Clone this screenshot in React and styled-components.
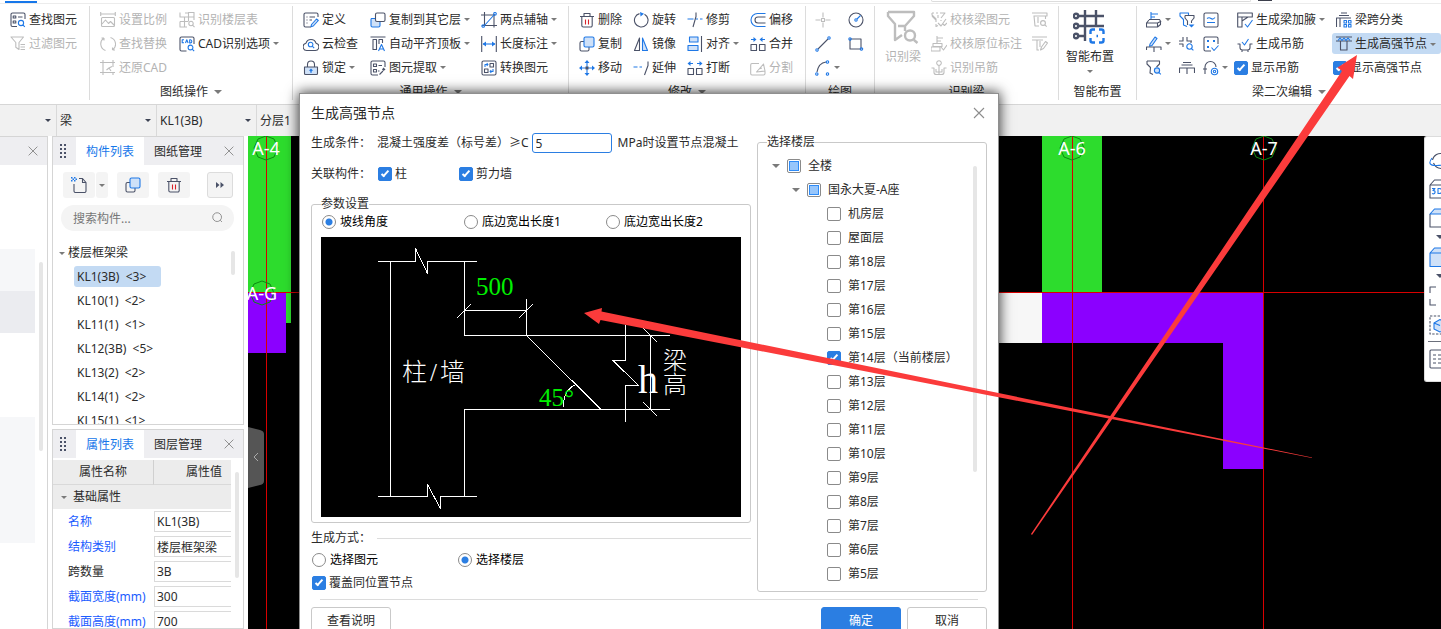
import React from 'react';
import styled, { createGlobalStyle, css } from 'styled-components';

const INK = '#4b5268';
const BLUE = '#1f78e6';
const GREY = '#bdbdbd';
const PALE = '#cfe1f8';

const GlobalStyle = createGlobalStyle`
  *, *::before, *::after { box-sizing: border-box; }
  body { margin: 0; overflow: hidden; }
  body, button, input, select {
    font-family: "Noto Sans", "Noto Sans CJK SC", sans-serif;
    font-size: 12px;
    line-height: 18px;
    color: #2b2b2b;
  }
  button, input, select { margin: 0; padding: 0; border: 0; background: none; }
  ul { list-style: none; margin: 0; padding: 0; }
`;

/* ---------- icons ---------- */

const PEN = {
  d: { stroke: INK }, b: { stroke: BLUE }, g: { stroke: GREY }, r: { stroke: '#d8232a' },
  db: { stroke: BLUE, strokeDasharray: '3 1.6' },
  dd: { stroke: INK, strokeDasharray: '2.4 1.4' },
  L: { stroke: BLUE, fill: PALE }, LD: { stroke: INK, fill: PALE }, W: { stroke: INK, fill: '#fff' },
  B: { fill: BLUE }, D: { fill: INK }, P: { fill: '#8fc0fa' },
  x: { stroke: '#8c8c8c' },
  G: { stroke: GREY, strokeWidth: 2.4 },
  N: { stroke: INK, strokeWidth: 2.4 },
  K: { stroke: BLUE, strokeWidth: 2.4 },
};
const ring = (x, y, r) => `M${x - r} ${y}a${r} ${r} 0 1 0 ${2 * r} 0a${r} ${r} 0 1 0 ${-2 * r} 0`;
const lens = (x, y, r) => `${ring(x, y, r)}M${x + r * 0.7} ${y + r * 0.7}l2 2`;
const trash = [['d', 'M1 4.5h14M5 4.5v-3h6v3M2.8 4.5v9a1.5 1.5 0 0 0 1.5 1.5h7.4a1.5 1.5 0 0 0 1.5-1.5v-9'], ['r', 'M6.5 7.5v5M9.5 7.5v5']];

const ICONS = {
  find: [['d', 'M7 14.5H2.5a1.5 1.5 0 0 1-1.5-1.5V2.5A1.5 1.5 0 0 1 2.5 1h11A1.5 1.5 0 0 1 15 2.5V7M3.2 4h2.6v2H3.2zM3.2 9h2.6v2H3.2zM8 5h4.5'], ['b', lens(11, 11, 2.6)]],
  filter: [['g', 'M1 1h12.5L9 6.5v7l-3.2-2.2V6.5zM10.5 8.5H15M10.5 11H15M10.5 13.5H15']],
  scale: [['g', 'M.7 0v4M15.3 0v4M.7 2h14.6M2.5 5.5h11a1 1 0 0 1 1 1v7a1 1 0 0 1-1 1h-11a1 1 0 0 1-1-1v-7a1 1 0 0 1 1-1zM2 12l3.5-4 3 3.5 2-2L14 13']],
  table: [['g', 'M1 .5V5h4.500M9.500 5V.5H15v5M6 1h3.500M5.500 5h9.500v3M1 9.500h8.500M1 9.500V15h7M5.500 5v9.800M9.500 5v4'], ['g', lens(12, 11.5, 2.2)]],
  replace: [['g', 'M5.500 14.500A7 7 0 0 1 4 2M4 2H1.500M4 2v2.500M10.500 1.500A7 7 0 0 1 12.500 14M12.500 14h2.500M12.500 14v-2.500']],
  cad: [['d', 'M7.500 15H2.500A1.500 1.500 0 0 1 1 13.500v-11A1.500 1.500 0 0 1 2.500 1h11A1.500 1.500 0 0 1 15 2.500V8'], ['b', lens(11.5, 11.5, 2.4)], ['b', 'M5 3.800H3.200v3H5M6.500 7l1.300-3.200L9.100 7M10.700 3.800v3.100h.8q1.300-.1 1.300-1.500t-1.300-1.600z']],
  restore: [['g', 'M0 2.500h15M3 0v15M0 12.500h15M13 0v7M13 12v3M12 6.500l-3 1.500 2 3M9 8l-2.500 2']],
  define: [['d', 'M8 15H2.500A1.500 1.500 0 0 1 1 13.500v-11A1.500 1.500 0 0 1 2.500 1h11A1.500 1.500 0 0 1 15 2.500V5M3.500 5h1M6.500 5H12M3.500 8h1M6.500 8H9M3.500 11h1'], ['L', 'M8.500 12.500l5-5.500 1.800 1.500-5 5.500-2.300.7z']],
  cloud: [['d', 'M4 14.500A3.700 3.700 0 0 1 3 7.200 5.200 5.200 0 0 1 13 7.200a3.700 3.700 0 0 1-1 7.300z'], ['b', lens(7.600, 8.500, 2.3)]],
  lock: [['d', 'M4.500 7V4.500a3.500 3.500 0 0 1 7 0V7'], ['LD', 'M1.500 7h13v6.500a1 1 0 0 1-1 1h-11a1 1 0 0 1-1-1z'], ['B', 'M8 8.600l2 2-1.300.4v1.800H7.300V11L6 10.600z']],
  copyTo: [['L', 'M1.500 6.500H9A1 1 0 0 1 10 7.500v6a1.500 1.500 0 0 1-1.500 1.500h-6A1.500 1.500 0 0 1 1 13.500v-6a1 1 0 0 1 .5-1z'], ['W', 'M7 1h6.500A1.500 1.500 0 0 1 15 2.500V8a1.500 1.500 0 0 1-1.500 1.500H7A1.500 1.500 0 0 1 5.500 8V2.500A1.500 1.500 0 0 1 7 1z']],
  autoAlign: [['d', 'M.5 1h15M3 3.500h3.500v10H3zM9 8V3.500h3.500V7'], ['b', 'M8.500 15l3-6.500 3 6.500M9.500 13h4']],
  extract: [['d', 'M8 15H2.500A1.500 1.500 0 0 1 1 13.500v-11A1.500 1.500 0 0 1 2.500 1h11A1.500 1.500 0 0 1 15 2.500V7M3.500 4h3v2.500h-3zM3.500 9.500h3V12h-3zM8.500 5.500H12M8 11h1.500M9.500 14.500l3.500-3.500'], ['D', 'M12 9.500l1.500-2 2 2-2 1.500z']],
  twoPoint: [['d', 'M0 3h14M3.500 0v14M13 2v13.500M1 13.500h15'], ['b', `M3 14L13 3${ring(14, 1.800, 1.3)}${ring(2.200, 14, 1.3)}`]],
  length: [['d', 'M.7 0v16M15.300 0v16'], ['b', 'M2 8h12'], ['B', 'M1.500 8L5 5.500v5zM14.500 8L11 5.500v5z']],
  convert: [['d', 'M2.500 1h11A1.500 1.500 0 0 1 15 2.500v11a1.500 1.500 0 0 1-1.500 1.500h-11A1.500 1.500 0 0 1 1 13.500v-11A1.500 1.500 0 0 1 2.500 1zM9 3.500h3.500V7H9zM3.500 9H7v3.500H3.500z'], ['b', 'M4 7V4.500h2.500M12 9v2.500H9.500M5.700 3l1.300 1.500L5.700 6M10.300 10L9 11.500l1.300 1.500']],
  trash,
  rotate: [['d', 'M11.500 2.200A6.800 6.800 0 1 1 6.500 1.600'], ['B', 'M7 0l4 1.800L7.600 4.600z']],
  trim: [['d', 'M9 .5v4L6 15'], ['b', 'M.5 7h6M9 7h2M13 7h2.500']],
  offset: [['b', 'M15.500 1.500H7.500a6 6 0 0 0 0 13h8'], ['d', 'M15.500 5H8a3 3 0 0 0 0 6h7.500']],
  copy: [['d', 'M5 5.500H2.500A1.500 1.500 0 0 0 1 7v6.500A1.500 1.500 0 0 0 2.500 15h6a1.500 1.500 0 0 0 1.500-1.500V11'], ['L', 'M6.500 1h7A1.500 1.500 0 0 1 15 2.500v7a1.500 1.500 0 0 1-1.500 1.500h-7A1.500 1.500 0 0 1 5 9.500v-7A1.500 1.500 0 0 1 6.500 1z']],
  mirror: [['d', 'M6.500 2v12.500h-5z'], ['L', 'M9.500 2v12.500h5z']],
  align: [['L', 'M2.500 1H11v5H2.500zM1 9.500h10v5H1z'], ['d', 'M14.500 0v16']],
  merge: [['d', 'M1 8.500h5.500v6H1zM9.500 8.500H15v6H9.500z'], ['b', 'M1 3.500h3.500M15 3.500h-3.500'], ['B', 'M6.500 3.500L3.500 1v5zM9.500 3.500l3-2.500v5z']],
  move: [['b', 'M8 1v14M1 8h14'], ['B', 'M8 0l2.500 3h-5zM8 16l2.500-3h-5zM0 8l3-2.500v5zM16 8l-3-2.500v5z'], ['D', 'M6.500 6.500h3v3h-3z']],
  extend: [['b', 'M.5 7h4M6.500 7H9'], ['d', 'M15 1.500v4L11.500 15']],
  cut: [['d', 'M1 8.500h5.500v6H1zM9.500 8.500H15v6H9.500z'], ['b', 'M2.500 3.500H6M13.500 3.500H10'], ['B', 'M.5 3.500L3.500 1v5zM15.500 3.500l-3-2.500v5z']],
  split: [['g', 'M9 3.500H2A1.500 1.500 0 0 0 .7 5v8.500A1.500 1.500 0 0 0 2 15h11.500a1.500 1.500 0 0 0 1.500-1.500V11M6.500 12l7-8 1.500 7zM9 9l3-1']],
  point: [['g', 'M8 .5v5M8 10.500v5M.5 8h5M10.500 8h5M6.500 6.500h3v3h-3z']],
  circle: [['d', ring(8, 8, 7)], ['b', `${ring(8, 8, 1.2)}M9 7l3.500-3.500`]],
  line: [['d', 'M3 13L13 3'], ['b', `${ring(2, 14, 1.2)}${ring(14, 2, 1.2)}`]],
  rect: [['d', 'M2 3h11v10H2z'], ['b', `${ring(2, 3, 1.2)}${ring(13.500, 13, 1.2)}`]],
  arc: [['d', 'M2 12Q3.500 3 11 2'], ['b', `${ring(12.500, 2, 1.2)}${ring(1.800, 14, 1.2)}${ring(12.500, 14, 1.2)}`]],
  checkBeam: [['g', 'M1 1h2M5 1h2M9 1h5l-4 5M1 1v2l4 4v3M1 4l4 4M5 12v2.500l2-1M7 3v3M10 8v1M7 11l3 3 5-7M12 12l1.500 1.500L16 11']],
  checkOrig: [['g', 'M6 0v7M6 2h6M6 5h4M2 7.500h9v3H2zM0 11h9v4H0zM10 11l2.500 3L16 9']],
  hangerG: [['g', `${ring(8, 3, 2.3)}M8 5.500V14M.5 8h2.500v4.500q0 2 2.500 2h5q2.500 0 2.500-2V8h2.500M5 9v3h6V9`]],
  beamFind: [['g', 'M0 1h15v3h-1.500v3M1.500 4h12M2 4l1 10h4M6 5v6'], ['g', lens(11, 11, 2.4)]],
  beamEdit: [['g', 'M0 1h15M0 4h11M5 4v10H7M8 11V5M8.500 14l1-3 4-5.500 2 1.500-4 5.500z']],
  annot: [['b', 'M5 0v7M5 2h7M5 5h4'], ['d', 'M3 7.500h10.500l1.500 2.500M.5 11h11v4H.5zM3 8l-2.500 3M11.500 11l3-1.500v3l-3 2.500']],
  annotEdit: [['L', 'M4 8l5-7 2 1.500-5 7-2.500.8z'], ['d', 'M.5 14V11h14.500v3M8 11v5']],
  funnelFind: [['d', 'M1 1h12.500v3L10.500 7M1 1v3l3.500 3.500L4 13l3 1.500'], ['L', lens(11, 10.5, 2.6)]],
  funnels: [['b', 'M9.500 3V1H1v3l3.500 3.500V13l3.500 1.500'], ['d', 'M6 3.500h9V6l-2.500 3v2M6 3.500V6l2.500 3v4'], ['B', 'M9.500 12.500h6l-3 3z']],
  spanFind: [['d', 'M0 5h4V1M8 1v4h5M0 8h4v3M12 5v2'], ['b', lens(10.5, 10.5, 2.7)]],
  spans: [['d', 'M4 2.500h8M2.500 5h11M.5 13V8h15v5M8 8v6']],
  tag: [['d', 'M2.500 1h11A1.500 1.500 0 0 1 15 2.500v11a1.500 1.500 0 0 1-1.500 1.500h-11A1.500 1.500 0 0 1 1 13.500v-11A1.500 1.500 0 0 1 2.500 1z'], ['b', 'M4 6.500q2-1.500 4 0t4-1M4 10.500h8']],
  dots: [['d', 'M8 15H2.500A1.500 1.500 0 0 1 1 13.500v-11A1.500 1.500 0 0 1 2.500 1h11A1.500 1.500 0 0 1 15 2.500V8'], ['B', 'M4 4h2v2H4zM10 4h2v2h-2zM4 10h2v2H4z'], ['b', 'M8.500 11.500l2.500 3 4.500-5']],
  hook: [['d', 'M2 14V7a5.500 5.500 0 0 1 11 0M0 9h4'], ['b', `${ring(11.500, 11.500, 3.2)}${ring(11.500, 11.500, 1.2)}`]],
  haunch: [['d', 'M.7 1h14.600v4H.7zM.7 5v10H5V5M5 9l6-4'], ['b', 'M8 12l2.500 3L15.500 8']],
  hanger: [['d', 'M.5 8H3v3.500Q3 14 5.500 14h5Q13 14 13 11.500V8h2.500M5 14.500v1.500M11 14.500v1.500'], ['b', 'M5 6l2.500 3L11.500 3']],
  spanClass: [['d', 'M5 1h6M3 3.500h10M.5 15V6H15M4 6v9'], ['b', 'M8 8.500h2.500V11H8zM12.500 8.500H15V11h-2.500zM8 12.500h2.500V15H8zM12.500 12.500H15V15h-2.500z']],
  node: [['d', 'M0 1h16M0 5h16M4.500 5v9h6.500V5'], ['b', 'M2 4.500l2-2.500 2 2.500 2-2.500 2 2.500 2-2.500 2 2.500']],
  newItem: [['d', 'M8 1.500h3.500L15 5.500V14a1.500 1.500 0 0 1-1.500 1.500h-9A1.500 1.500 0 0 1 3 14V7M11.500 1.500v4H15'], ['B', 'M0 0h1.500v1.500H0zM3 0h1.500v1.500H3zM1.500 1.500H3V3H1.500zM4.500 1.500H6V3H4.500zM0 3h1.500v1.500H0zM3 3h1.500v1.500H3z']],
  more: [['D', 'M4 5l3.500 3L4 11zM8.500 5L12 8l-3.500 3z']],
  search: [['x', lens(7, 7, 5)]],
  close: [['x', 'M3 3l10 10M13 3L3 13']],
  grip: [['D', 'M4 1h2v2H4zM8 1h2v2H8zM4 5h2v2H4zM8 5h2v2H8zM4 9h2v2H4zM8 9h2v2H8zM4 13h2v2H4zM8 13h2v2H8z']],
  orbit: [['d', 'M3.500 10a8 8 0 1 1 14.500 6M4.500 13a9 9 0 0 0 8 5.500H20'], ['b', 'M3 8Q-3 16 8 15.500T20 10']],
  cube: [['d', 'M1 6h18v12.500H1zM1 6l4.500-5H20']],
  cubeText: [['d', 'M1 6v13h18M1 6l4.500-5H20M1 6h18'], ['b', 'M3 9.500h3l-2 2q2.500 0 2 2t-3 1M9 9.500v5h1q3 0 3-2.500t-3-2.500z']],
  cubeTop: [['d', 'M1 6v13h18'], ['L', 'M1 6l4.500-5H20v5z']],
  cubeFill: [['L', 'M1 6l4.500-5H20v18.500H1zM1 6h18']],
  corners: [['d', 'M1 7V1h6M1 13v6h6M13 1h6v6M13 19h6v-6']],
  cubeDash: [['dd', 'M1 1h18v18H1z'], ['L', 'M5 8l6-3.500 6 3.500v6l-6 3-6-3zM5 8l6 2.500']],
  list: [['d', 'M2 1h17v18H2a1 1 0 0 1-1-1V2a1 1 0 0 1 1-1zM4 6h3M9 6h8M4 10h3M9 10h8M4 14h3M9 14h8']],
  bigFunnel: [['G', 'M2 2h26v4l-9 10M2 2v4l7 8v16l7-5M12 16h7v5'], ['G', 'M19 25.500a5 5 0 1 0 10 0a5 5 0 1 0-10 0M28 30l3.500 3']],
  bigGrid: [['N', 'M5 6h26M5 16h26M5 26h8M12 0v31M23 0v16'], ['N', `${ring(3, 6, 2.2)}${ring(3, 16, 2.2)}${ring(3, 26, 2.2)}`], ['K', 'M17.500 24v-2.500a2 2 0 0 1 2-2H22M26 19.500h2.500a2 2 0 0 1 2 2V24M30.500 28v2.500a2 2 0 0 1-2 2H26M22 32.500h-2.500a2 2 0 0 1-2-2V28M23.500 26h1.500']],
};

const Svg = styled.svg`
  flex: none;
  display: block;
  width: ${p => p.$size}px;
  height: ${p => p.$size}px;
`;
const Icon = ({ name, size = 16, box = 16 }) => (
  <Svg $size={size} viewBox={`0 0 ${box} ${box}`} fill="none" strokeWidth="1.1" strokeLinejoin="round" aria-hidden="true">
    {ICONS[name].map(([pen, d], i) => <path key={i} d={d} {...PEN[pen]} />)}
  </Svg>
);

const Caret = styled.span`
  flex: none;
  border: ${p => p.$size || 3}px solid transparent;
  border-top-color: ${p => p.$color || '#7a7a7a'};
  border-bottom: 0;
`;

/* ---------- controls ---------- */

const CheckBox = styled.input.attrs({ type: 'checkbox' })`
  appearance: none;
  flex: none;
  width: 14px;
  height: 14px;
  border: 1px solid #8a8a8a;
  border-radius: 2px;
  background: #fff;
  position: relative;
  &:checked { background: #2b7ee2; border-color: #2b7ee2; }
  &:checked::after {
    content: '';
    position: absolute;
    left: 4px;
    top: 1px;
    width: 4px;
    height: 8px;
    border: solid #fff;
    border-width: 0 2px 2px 0;
    transform: rotate(42deg);
  }
  ${p => p.$partial && css`
    &::before {
      content: '';
      position: absolute;
      inset: 1px;
      background: #97c6fb;
      border: 1px solid #2e8bf7;
    }
  `}
`;
const Radio = styled.input.attrs({ type: 'radio' })`
  appearance: none;
  flex: none;
  width: 14px;
  height: 14px;
  border: 1px solid #8a8a8a;
  border-radius: 50%;
  background: #fff;
  &:checked { background: radial-gradient(circle, #2b7ee2 3px, #fff 4px); }
`;
const Choice = styled.label`
  display: flex;
  align-items: center;
  gap: ${p => p.$gap || 3}px;
  height: 18px;
  white-space: nowrap;
  color: ${p => (p.$strong ? '#000' : '#2b2b2b')};
`;

/* ---------- ribbon ---------- */

const Shell = styled.div`
  position: relative;
  display: flex;
  flex-direction: column;
  height: 100vh;
  overflow: hidden;
  background: #fff;
`;
const TabStrip = styled.div`
  height: 4px;
  border-bottom: 1px solid #ececec;
  padding: 0 169px 0 5px;
  display: flex;
  align-items: flex-end;
  flex: none;
`;
const ActiveMark = styled.div`
  width: 32px;
  height: 2px;
  margin-right: auto;
  background: #1677ea;
`;
const SearchEdge = styled.div`
  align-self: flex-start;
  width: 320px;
  height: 2px;
  border: 1px solid #dcdcdc;
  border-top: 0;
  border-radius: 0 0 2px 2px;
`;
const DarkEdge = styled.div`
  align-self: flex-start;
  width: 14px;
  height: 1px;
  margin-left: 7px;
  background: #3c3f4c;
`;
const Ribbon = styled.header`
  display: flex;
  flex: none;
  padding: 2px 0 4px;
  border-bottom: 1px solid #d6d6d6;
`;
const Group = styled.section`
  display: flex;
  flex-direction: column;
  flex: ${p => (p.$w ? 'none' : '1')};
  width: ${p => (p.$w ? `${p.$w}px` : 'auto')};
  height: 94px;
  padding-top: 1px;
  border-right: ${p => (p.$w ? '1px solid #dcdcdc' : '0')};
`;
const Tools = styled.div`
  display: flex;
  flex: none;
  height: 72px;
  padding-left: ${p => (p.$pad === undefined ? 10 : p.$pad)}px;
`;
const Column = styled.div`
  display: flex;
  flex-direction: column;
  flex: ${p => (p.$w ? 'none' : '1')};
  width: ${p => (p.$w ? `${p.$w}px` : 'auto')};
`;
const GroupName = styled.button`
  display: flex;
  align-items: center;
  justify-content: center;
  gap: 6px;
  height: 21px;
  padding-top: 5px;
`;
const ToolButton = styled.button`
  display: flex;
  align-items: center;
  gap: 3px;
  flex: none;
  height: 24px;
  padding-top: 1px;
  padding-left: ${p => p.$pad || 0}px;
  white-space: nowrap;
  color: ${p => (p.disabled ? '#b3b3b3' : '#2b2b2b')};
  ${p => p.$on && css`
    height: 21px;
    margin: 2px 0 1px;
    background: #c3daf3;
    border-radius: 3px;
  `}
`;
const RibbonCheck = styled(Choice)`
  height: 24px;
  padding-top: 2px;
  padding-left: ${p => p.$pad || 0}px;
`;
const BigButton = styled.button`
  display: flex;
  flex-direction: column;
  align-items: center;
  width: ${p => p.$w}px;
  height: 72px;
  padding-top: 3px;
  gap: 4px;
  line-height: 18px;
  white-space: nowrap;
  color: ${p => (p.disabled ? '#b3b3b3' : '#2b2b2b')};
`;

const Tool = ({ icon, text, off, caret, on, pad }) => (
  <ToolButton type="button" disabled={off} $on={on} $pad={pad} aria-label={text || icon}>
    <Icon name={icon} />
    {text && <span>{text}</span>}
    {caret && <Caret />}
  </ToolButton>
);
const Name = ({ children, plain }) => (
  <GroupName type="button">{children}{!plain && <Caret $size={4} />}</GroupName>
);

const RibbonBar = () => (
  <Ribbon>
    <Group $w={90}>
      <Tools>
        <Column><Tool icon="find" text="查找图元" /><Tool icon="filter" text="过滤图元" off /></Column>
      </Tools>
    </Group>
    <Group $w={203}>
      <Tools>
        <Column $w={79}>
          <Tool icon="scale" text="设置比例" off /><Tool icon="replace" text="查找替换" off /><Tool icon="restore" text="还原CAD" off />
        </Column>
        <Column><Tool icon="table" text="识别楼层表" off /><Tool icon="cad" text="CAD识别选项" caret /></Column>
      </Tools>
      <Name>图纸操作</Name>
    </Group>
    <Group $w={276}>
      <Tools>
        <Column $w={67}><Tool icon="define" text="定义" /><Tool icon="cloud" text="云检查" /><Tool icon="lock" text="锁定" caret /></Column>
        <Column $w={111}>
          <Tool icon="copyTo" text="复制到其它层" caret /><Tool icon="autoAlign" text="自动平齐顶板" caret /><Tool icon="extract" text="图元提取" caret />
        </Column>
        <Column><Tool icon="twoPoint" text="两点辅轴" caret /><Tool icon="length" text="长度标注" caret /><Tool icon="convert" text="转换图元" /></Column>
      </Tools>
      <Name>通用操作</Name>
    </Group>
    <Group $w={237}>
      <Tools>
        <Column $w={54}><Tool icon="trash" text="删除" /><Tool icon="copy" text="复制" /><Tool icon="move" text="移动" /></Column>
        <Column $w={54}><Tool icon="rotate" text="旋转" /><Tool icon="mirror" text="镜像" /><Tool icon="extend" text="延伸" /></Column>
        <Column $w={63}><Tool icon="trim" text="修剪" /><Tool icon="align" text="对齐" caret /><Tool icon="cut" text="打断" /></Column>
        <Column><Tool icon="offset" text="偏移" /><Tool icon="merge" text="合并" /><Tool icon="split" text="分割" off /></Column>
      </Tools>
      <Name>修改</Name>
    </Group>
    <Group $w={69}>
      <Tools $pad={9}>
        <Column $w={33}><Tool icon="point" off /><Tool icon="line" /><Tool icon="arc" caret /></Column>
        <Column><Tool icon="circle" /><Tool icon="rect" /></Column>
      </Tools>
      <Name plain>绘图</Name>
    </Group>
    <Group $w={184}>
      <Tools>
        <Column $w={46}>
          <BigButton type="button" disabled $w={36}><Icon name="bigFunnel" size={34} box={34} />识别梁</BigButton>
        </Column>
        <Column $w={101}>
          <Tool icon="checkBeam" text="校核梁图元" off /><Tool icon="checkOrig" text="校核原位标注" off /><Tool icon="hangerG" text="识别吊筋" off />
        </Column>
        <Column><Tool icon="beamFind" off /><Tool icon="beamEdit" off /></Column>
      </Tools>
      <Name plain>识别梁</Name>
    </Group>
    <Group $w={78}>
      <Tools $pad={0}>
        <BigButton type="button" $w={62}><Icon name="bigGrid" size={34} box={34} />智能布置<Caret /></BigButton>
      </Tools>
      <Name plain>智能布置</Name>
    </Group>
    <Group>
      <Tools $pad={9}>
        <Column $w={33}><Tool icon="annot" caret /><Tool icon="annotEdit" caret /><Tool icon="funnelFind" /></Column>
        <Column $w={24}><Tool icon="funnels" /><Tool icon="spanFind" /><Tool icon="spans" /></Column>
        <Column $w={31}><Tool icon="tag" /><Tool icon="dots" /><Tool icon="hook" caret /></Column>
        <Column $w={98}>
          <Tool icon="haunch" text="生成梁加腋" caret pad={3} /><Tool icon="hanger" text="生成吊筋" pad={3} />
          <RibbonCheck><CheckBox defaultChecked />显示吊筋</RibbonCheck>
        </Column>
        <Column>
          <Tool icon="spanClass" text="梁跨分类" pad={4} /><Tool icon="node" text="生成高强节点" caret on pad={4} />
          <RibbonCheck $pad={1}><CheckBox defaultChecked />显示高强节点</RibbonCheck>
        </Column>
      </Tools>
      <Name>梁二次编辑</Name>
    </Group>
  </Ribbon>
);

/* ---------- context bar ---------- */

const ContextBar = styled.div`
  display: flex;
  flex: none;
  height: 31px;
  background: #f1f1f1;
`;
const Picker = styled.label`
  display: flex;
  align-items: center;
  width: ${p => p.$w}px;
  padding: 0 5px 0 3px;
  border-right: 1px solid #d9d9d9;
`;
const Select = styled.select`
  appearance: none;
  flex: 1;
  min-width: 0;
  height: 24px;
`;
const Pick = ({ w, name, value }) => (
  <Picker $w={w}>
    <Select aria-label={name}><option>{value}</option></Select>
    <Caret $color="#3d4354" />
  </Picker>
);

/* ---------- docks ---------- */

const Workspace = styled.div`
  display: flex;
  flex: 1;
  min-height: 0;
`;
const NavDock = styled.aside`
  display: flex;
  flex-direction: column;
  flex: none;
  width: 48px;
  border-right: 1px solid #d5d5d5;
`;
const NavHead = styled.div`
  display: flex;
  align-items: center;
  justify-content: flex-end;
  height: 29px;
  padding-right: 7px;
  background: #eeeef1;
  border-top: 1px solid #d5d5d5;
`;
const NavBody = styled.div`
  display: flex;
  flex: 1;
  justify-content: space-between;
  padding-right: 4px;
`;
const NavList = styled.div`
  display: flex;
  flex-direction: column;
  width: 35px;
  padding-top: 84px;
`;
const NavBlock = styled.div`
  height: ${p => p.$h}px;
  background: ${p => p.$tone};
`;
const Thumb = styled.div`
  flex: none;
  width: 4px;
  height: ${p => p.$h}px;
  margin-top: ${p => p.$top}px;
  border-radius: 2px;
  background: #e6e6e6;
`;
const PanelStack = styled.div`
  display: flex;
  flex-direction: column;
  flex: none;
  width: 200px;
  padding: 0 4px;
  gap: 4px;
`;
const Panel = styled.section`
  display: flex;
  flex-direction: column;
  flex: ${p => (p.$h ? 'none' : '1')};
  height: ${p => (p.$h ? `${p.$h}px` : 'auto')};
  min-height: 0;
  overflow: hidden;
  border: 1px solid #d5d5d5;
`;
const PanelHead = styled.div`
  display: flex;
  align-items: stretch;
  flex: none;
  height: 28px;
  background: #eeeef1;
`;
const Grip = styled.div`
  display: flex;
  align-items: center;
  width: 23px;
  padding-left: 3px;
`;
const Tab = styled.button`
  width: 68px;
  padding-top: 1px;
  background: ${p => (p.$on ? '#fff' : 'transparent')};
  color: ${p => (p.$on ? '#1677ea' : '#2b2b2b')};
`;
const CloseButton = styled.button`
  display: flex;
  align-items: center;
  margin-left: auto;
  padding-right: ${p => p.$pad || 0}px;
`;
const Head = ({ on, other }) => (
  <PanelHead>
    <Grip><Icon name="grip" /></Grip>
    <Tab type="button" $on>{on}</Tab>
    <Tab type="button">{other}</Tab>
    <CloseButton type="button" aria-label="关闭" $pad={7}><Icon name="close" size={14} /></CloseButton>
  </PanelHead>
);
const PanelTools = styled.div`
  display: flex;
  gap: 9px;
  padding: 7px 10px 7px 10px;
`;
const PanelButton = styled.button`
  display: flex;
  align-items: center;
  justify-content: center;
  width: ${p => p.$w || 32}px;
  height: 26px;
  border-radius: 3px;
  background: #f4f4f4;
  ${p => p.$edge && css`border: 1px solid #dcdcdc; margin-left: auto;`}
`;
const Split = styled.div`
  display: flex;
  gap: 1px;
`;
const SearchBox = styled.label`
  display: flex;
  align-items: center;
  flex: none;
  height: 26px;
  margin: 0 9px 0 8px;
  padding: 0 9px 0 12px;
  border-radius: 13px;
  background: #f4f4f4;
`;
const SearchInput = styled.input`
  flex: 1;
  min-width: 0;
  height: 20px;
  &::placeholder { color: #777; opacity: 1; }
`;
const TreeArea = styled.div`
  display: flex;
  justify-content: space-between;
  padding: 10px 8px 0 6px;
`;
const TreeHead = styled.button`
  display: flex;
  align-items: center;
  gap: 3px;
  height: 24px;
`;
const Member = styled.button`
  display: block;
  height: 21px;
  margin: 0 0 3px 15px;
  padding: 0 ${p => (p.$on ? 15 : 3)}px 0 3px;
  border-radius: 3px;
  white-space: pre;
  background: ${p => (p.$on ? '#c3daf3' : 'transparent')};
`;
const MEMBERS = ['KL1(3B)  <3>', 'KL10(1)  <2>', 'KL11(1)  <1>', 'KL12(3B)  <5>', 'KL13(2)  <2>', 'KL14(1)  <2>', 'KL15(1)  <1>'];
const MemberList = styled.div`
  padding-top: 1px;
`;

const PropArea = styled.div`
  display: flex;
  justify-content: space-between;
  padding: 2px 4px 0 0;
`;
const PropTable = styled.table`
  width: 178px;
  border-collapse: separate;
  border-spacing: 0;
  table-layout: fixed;
`;
const HeadCell = styled.th`
  width: ${p => p.$w || 'auto'};
  height: 25px;
  padding: ${p => p.$pad || 0};
  font-weight: 400;
  text-align: ${p => p.$side || 'center'};
  background: #ececec;
  border-bottom: 1px solid #d9d9d9;
  border-right: ${p => (p.$line ? '1px solid #d0d0d0' : '0')};
`;
const SectionCell = styled.td`
  height: 24px;
  padding: 0 0 0 8px;
  background: #ececec;
`;
const SectionName = styled.div`
  display: flex;
  align-items: center;
  gap: 6px;
`;
const LabelCell = styled.td`
  height: 25px;
  padding: 0 0 0 15px;
  white-space: nowrap;
  color: ${p => (p.$key ? '#1b5cff' : '#2b2b2b')};
`;
const ValueCell = styled.td`
  padding: 0;
`;
const ValueInput = styled.input`
  display: block;
  width: 100%;
  height: 21px;
  padding-left: 2px;
  border: 1px solid #dadada;
  border-right: 0;
`;
const PROPS = [['名称', 'KL1(3B)', true], ['结构类别', '楼层框架梁', true], ['跨数量', '3B', false], ['截面宽度(mm)', '300', true], ['截面高度(mm)', '700', true]];

/* ---------- drawing canvas ---------- */

const Stage = styled.main`
  position: relative;
  flex: 1;
  min-width: 0;
  background: #000;
`;
const Drawing = styled.svg`
  position: absolute;
  inset: 0;
  width: 100%;
  height: 100%;
  font-size: 18px;
`;
const Axis = ({ x, y, children }) => (
  <g>
    <path d={`M${x} ${y - 12}l8 3 4 9-4 9-8 3-8-3-4-9 4-9z`} fill="none" stroke="#0d8a12" />
    <text x={x} y={y + 7} fill="#fff" textAnchor="middle">{children}</text>
  </g>
);
const Model = () => (
  <Drawing>
    <path d="M0 0H43V187H38V157H0zM794 0h60v157h-60z" fill="#2ddc2d" />
    <path d="M750 157h44v50h-44z" fill="#f7f7f7" />
    <path d="M0 157h38v60H0zM794 157h222v176h-41V207h-181z" fill="#8b00ff" />
    <path d="M18.500 0V600M0 156.500H1193M824.500 0V600M1015.500 0V600" stroke="#d80000" fill="none" />
    <Axis x={18} y={12}>A-4</Axis>
    <Axis x={14} y={157}>A-G</Axis>
    <Axis x={824} y={12}>A-6</Axis>
    <Axis x={1016} y={12}>A-7</Axis>
    <path d="M0 291L12 294q4 1 4 4v47q0 3-4 4L0 352z" fill="#555" />
    <path d="M10 317l-4 4 4 4" stroke="#aaa" fill="none" />
  </Drawing>
);
const ViewBar = styled.nav`
  position: absolute;
  top: 0;
  right: 0;
  width: 17px;
  overflow: hidden;
  padding: 13px 0 12px 4px;
  background: #fff;
  border: 1px solid #dcdcdc;
  border-right: 0;
  border-radius: 3px 0 0 3px;
`;
const ViewButton = styled.button`
  display: flex;
  flex-direction: column;
  align-items: flex-start;
  justify-content: flex-start;
  height: ${p => (p.$menu ? 39 : p.$last ? 20 : 29)}px;
`;
const ViewCaret = styled(Caret)`
  margin: 7px 0 0 7px;
`;
const Rule = styled.hr`
  margin: -3px 0 7px -1px;
  border: 0;
  border-top: 1px solid #6b6f7b;
`;
const VIEWS = [['orbit'], ['cubeText'], ['cubeTop', true], ['cubeFill', true], ['corners'], ['cubeDash']];

/* ---------- dialog ---------- */

const Dialog = styled.form`
  position: absolute;
  left: 299px;
  top: 93px;
  width: 700px;
  padding: 0 11px 16px;
  background: #fff;
  border: 1px solid #8f8f8f;
  box-shadow: 0 0 12px 1px rgba(0, 0, 0, 0.75);
`;
const TitleRow = styled.div`
  display: flex;
  align-items: center;
  height: 39px;
  padding-bottom: 2px;
`;
const Title = styled.h1`
  margin: 0;
  font-size: 14px;
  line-height: 20px;
  font-weight: 400;
`;
const DialogBody = styled.div`
  display: grid;
  grid-template-columns: 440px 230px;
  gap: 6px;
`;
const LeftSide = styled.div`
  display: flex;
  flex-direction: column;
`;
const Line = styled.div`
  display: flex;
  align-items: center;
  height: 20px;
  margin-bottom: 11px;
`;
const Caption = styled.span`
  width: ${p => p.$w || 66}px;
  white-space: nowrap;
`;
const StrengthInput = styled.input`
  width: 80px;
  height: 20px;
  margin: 0 6px 0 3px;
  padding: 0 3px;
  border: 1px solid #2b7ee2;
  border-radius: 3px;
`;
const Slot = styled.div`
  width: ${p => p.$w}px;
`;
const Fieldset = styled.fieldset`
  min-width: 0;
  margin: 0;
  padding: 0 9px 5px;
  border: 1px solid #c9c9c9;
  border-radius: 3px;
`;
const Legend = styled.legend`
  padding: 0;
  line-height: 18px;
`;
const Radios = styled.div`
  display: flex;
  padding-left: ${p => p.$pad || 0}px;
  margin-top: ${p => p.$top || 0}px;
`;
const Diagram = styled.svg`
  display: block;
  width: 100%;
  height: 280px;
  margin-top: 6px;
  background: #000;
  font-family: "Liberation Serif", "Noto Sans CJK SC", serif;
  font-size: 25px;
  font-weight: 300;
`;
const ModeHead = styled.div`
  display: flex;
  align-items: center;
  height: 18px;
  margin-top: 6px;
  &::after { content: ''; flex: 1; border-top: 1px solid #dcdcdc; }
`;
const Cover = styled(Choice)`
  margin: 5px 0 0 1px;
`;
const FloorSet = styled(Fieldset)`
  display: block;
  padding: 0 9px 4px;
`;
const FloorArea = styled.div`
  display: flex;
  justify-content: space-between;
  padding-top: 3px;
`;
const FloorRow = styled.li`
  display: flex;
  align-items: center;
  gap: 7px;
  height: 24px;
  padding-left: ${p => p.$pad}px;
`;
const Foot = styled.div`
  display: flex;
  gap: 6px;
  padding-top: 7px;
`;
const FootRule = styled.hr`
  margin: 7px 9px 0;
  border: 0;
  border-top: 1px solid #dcdcdc;
`;
const FootButton = styled.button`
  width: 80px;
  height: 28px;
  border: 1px solid ${p => (p.$main ? '#2b7ee2' : '#c9c9c9')};
  border-radius: 3px;
  background: ${p => (p.$main ? '#2b7ee2' : '#fff')};
  color: ${p => (p.$main ? '#fff' : '#2b2b2b')};
  ${p => p.$push && css`margin-right: auto;`}
`;
const FLOORS = ['机房层', '屋面层', '第18层', '第17层', '第16层', '第15层', '第14层（当前楼层）', '第13层', '第12层', '第11层', '第10层', '第9层', '第8层', '第7层', '第6层', '第5层'];

const HaunchDiagram = () => (
  <Diagram>
    <path
      fill="none" stroke="#fff" shapeRendering="crispEdges"
      d="M69.500 24.500V259.500M143.500 24.500V98.500H349M57 24.500H94.500V11.500L106.500 36.500V24.500H156M57 259.500H106.500V247.500L119.500 271.500V259.500H156M349 172.500H143.500V259.500M143.500 73.500H205.500M205.500 62V98.500L280 172.500M136 81l14-14M198 81l14-14M304.500 88V123.500H292L317.500 148.500H304.500V184.500M329.500 98.500V172.500M322 91l14 14M322 165l14 14M255 147.500Q242 153 242.500 170.500"
    />
    <text x="155" y="58" fill="#00f000">500</text>
    <text x="218" y="169" fill="#00f000">45°</text>
    <g fill="#fff">
      <text x="81" y="144">柱</text>
      <text x="109" y="144">/</text>
      <text x="119" y="144">墙</text>
      <text fontSize="24"><tspan x="342" y="132">梁</tspan><tspan x="342" y="156">高</tspan></text>
      <text x="317" y="156" fontSize="40">h</text>
    </g>
  </Diagram>
);

const NodeDialog = () => (
  <Dialog role="dialog" aria-label="生成高强节点">
    <TitleRow>
      <Title>生成高强节点</Title>
      <CloseButton type="button" aria-label="关闭"><Icon name="close" /></CloseButton>
    </TitleRow>
    <DialogBody>
      <LeftSide>
        <Line>
          <Caption>生成条件：</Caption>
          <label htmlFor="grade">混凝土强度差（标号差）≥C</label>
          <StrengthInput id="grade" defaultValue="5" />
          <span>MPa时设置节点混凝土</span>
        </Line>
        <Line>
          <Caption $w={67}>关联构件：</Caption>
          <Slot $w={81}><Choice><CheckBox defaultChecked />柱</Choice></Slot>
          <Choice><CheckBox defaultChecked />剪力墙</Choice>
        </Line>
        <Fieldset>
          <Legend>参数设置</Legend>
          <Radios $pad={1}>
            <Slot $w={142}><Choice $gap={4} $strong><Radio name="param" defaultChecked />坡线角度</Choice></Slot>
            <Slot $w={142}><Choice $gap={4} $strong><Radio name="param" />底边宽出长度1</Choice></Slot>
            <Choice $gap={4} $strong><Radio name="param" />底边宽出长度2</Choice>
          </Radios>
          <HaunchDiagram />
        </Fieldset>
        <ModeHead><Caption>生成方式：</Caption></ModeHead>
        <Radios $pad={1} $top={4}>
          <Slot $w={146}><Choice $gap={4} $strong><Radio name="mode" />选择图元</Choice></Slot>
          <Choice $gap={4} $strong><Radio name="mode" defaultChecked />选择楼层</Choice>
        </Radios>
        <Cover><CheckBox defaultChecked />覆盖同位置节点</Cover>
      </LeftSide>
      <FloorSet>
        <Legend>选择楼层</Legend>
        <FloorArea>
          <ul>
            <FloorRow $pad={5}><Caret $size={4} /><Choice $gap={7}><CheckBox $partial />全楼</Choice></FloorRow>
            <FloorRow $pad={25}><Caret $size={4} /><Choice $gap={7}><CheckBox $partial />国永大夏-A座</Choice></FloorRow>
            {FLOORS.map((f, i) => (
              <FloorRow key={f} $pad={60}><Choice $gap={7}><CheckBox defaultChecked={i === 6} />{f}</Choice></FloorRow>
            ))}
          </ul>
          <Thumb $h={306} $top={12} />
        </FloorArea>
      </FloorSet>
    </DialogBody>
    <FootRule />
    <Foot>
      <FootButton type="button" $push>查看说明</FootButton>
      <FootButton type="button" $main>确定</FootButton>
      <FootButton type="button">取消</FootButton>
    </Foot>
  </Dialog>
);

const Markup = styled.svg`
  position: absolute;
  inset: 0;
  width: 100%;
  height: 100%;
  pointer-events: none;
`;

export default function App() {
  return (
    <Shell>
      <GlobalStyle />
      <TabStrip><ActiveMark /><SearchEdge /><DarkEdge /></TabStrip>
      <RibbonBar />
      <ContextBar>
        <Pick w={57} name="楼层" value="" />
        <Pick w={100} name="类型" value="梁" />
        <Pick w={100} name="构件" value="KL1(3B)" />
        <Pick w={100} name="分层" value="分层1" />
      </ContextBar>
      <Workspace>
        <NavDock>
          <NavHead><CloseButton type="button" aria-label="关闭"><Icon name="close" size={14} /></CloseButton></NavHead>
          <NavBody>
            <NavList>
              <NavBlock $h={42} $tone="#f6f7f9" />
              <NavBlock $h={42} $tone="#ebecf0" />
              <NavBlock $h={84} $tone="#fff" />
              <NavBlock $h={126} $tone="#f6f7f9" />
            </NavList>
            <Thumb $h={189} $top={97} />
          </NavBody>
        </NavDock>
        <PanelStack>
          <Panel $h={289}>
            <Head on="构件列表" other="图纸管理" />
            <PanelTools>
              <Split>
                <PanelButton type="button" aria-label="新建"><Icon name="newItem" /></PanelButton>
                <PanelButton type="button" aria-label="新建选项" $w={12}><Caret /></PanelButton>
              </Split>
              <PanelButton type="button" aria-label="复制"><Icon name="copy" /></PanelButton>
              <PanelButton type="button" aria-label="删除"><Icon name="trash" /></PanelButton>
              <PanelButton type="button" aria-label="更多" $w={26} $edge><Icon name="more" /></PanelButton>
            </PanelTools>
            <SearchBox>
              <SearchInput placeholder="搜索构件..." />
              <Icon name="search" size={14} />
            </SearchBox>
            <TreeArea>
              <div>
                <TreeHead type="button"><Caret />楼层框架梁</TreeHead>
                <MemberList>
                  {MEMBERS.map((m, i) => <Member type="button" key={m} $on={i === 0}>{m}</Member>)}
                </MemberList>
              </div>
              <Thumb $h={24} $top={10} />
            </TreeArea>
          </Panel>
          <Panel>
            <Head on="属性列表" other="图层管理" />
            <PropArea>
              <PropTable>
                <thead>
                  <tr><HeadCell $w="101px" $line>属性名称</HeadCell><HeadCell $side="right" $pad="0 9px 0 0">属性值</HeadCell></tr>
                </thead>
                <tbody>
                  <tr><SectionCell colSpan={2}><SectionName><Caret />基础属性</SectionName></SectionCell></tr>
                  {PROPS.map(([label, value, key]) => (
                    <tr key={label}>
                      <LabelCell $key={key}>{label}</LabelCell>
                      <ValueCell><ValueInput aria-label={label} defaultValue={value} /></ValueCell>
                    </tr>
                  ))}
                </tbody>
              </PropTable>
              <Thumb $h={106} $top={12} />
            </PropArea>
          </Panel>
        </PanelStack>
        <Stage>
          <Model />
          <ViewBar>
            {VIEWS.map(([icon, menu]) => (
              <ViewButton type="button" key={icon} $menu={menu} aria-label={icon}>
                <Icon name={icon} size={20} box={20} />
                {menu && <ViewCaret $size={4} $color={INK} />}
              </ViewButton>
            ))}
            <Rule />
            <ViewButton type="button" $last aria-label="list"><Icon name="list" size={20} box={20} /></ViewButton>
          </ViewBar>
        </Stage>
      </Workspace>
      <NodeDialog />
      <Markup fill="#fb3b3b">
        <path d="M1357 55L1353 79L1349.500 76L1032 535L1031 534L1342 71L1337.500 67.500z" />
        <path d="M584 313L602 308L601.500 311.500L1312 457.500V458L600.500 320L599 324z" />
      </Markup>
    </Shell>
  );
}
